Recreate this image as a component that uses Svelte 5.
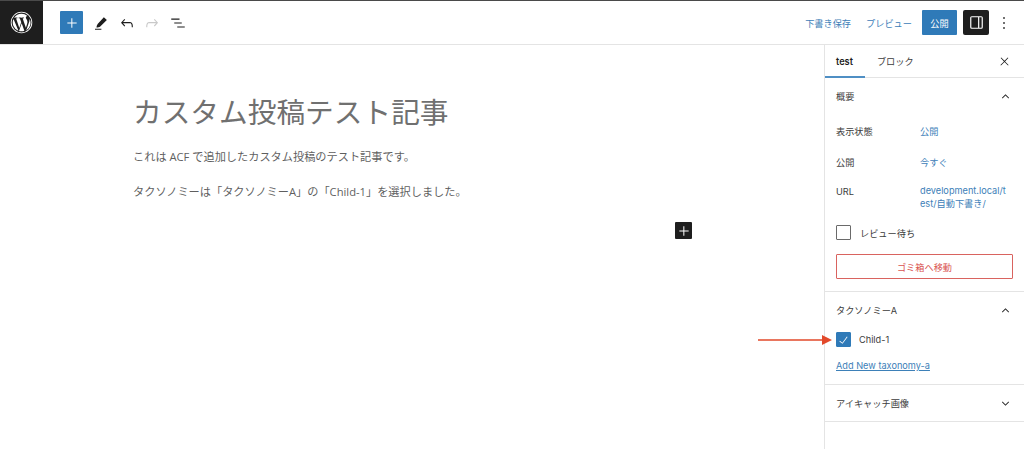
<script lang="ts">
	const jp = 'ja';
</script>

<div class="editor" lang={jp}>
	<header class="topbar">
		<a class="logo" href="#wp" aria-label="WordPress">
			<svg viewBox="0 0 80 80" width="23" height="23">
				<path fill="#fff" d="M40 2.5A37.5 37.5 0 1 0 77.5 40 37.5 37.5 0 0 0 40 2.5zm0 2.9A34.6 34.6 0 1 1 5.4 40 34.6 34.6 0 0 1 40 5.4zM40 9.5a30.5 30.5 0 0 0-25.5 13.8h2c3.200 0 8.100-.4 8.100-.4 1.600-.1 1.800 2.300.200 2.500 0 0-1.700.2-3.500.3l11.100 33 6.700-20-4.700-13c-1.600-.1-3.200-.3-3.200-.3-1.600-.1-1.400-2.600.2-2.500 0 0 5 .4 8 .4 3.200 0 8.100-.4 8.100-.4 1.600-.1 1.800 2.300.2 2.500 0 0-1.600.2-3.500.3l11 32.800 3.100-10.200c1.300-4.200 2.300-7.300 2.300-9.900 0-3.800-1.400-6.400-2.500-8.400-1.600-2.500-3-4.600-3-7.100 0-2.800 2.100-5.400 5.100-5.400h.4A30.400 30.400 0 0 0 40 9.500zM12.200 27.600a30.500 30.500 0 0 0 17.200 41L12.200 27.600zm55.500-.5a23 23 0 0 1 .2 3.100c0 3.100-.6 6.600-2.300 10.900l-9.300 26.700a30.500 30.500 0 0 0 11.400-40.700zM40.600 42.800 31.400 69.400a30.500 30.500 0 0 0 18.700-.5l-.2-.4-9.300-25.700z"/>
			</svg>
		</a>
		<div class="tools">
			<button class="inserter" aria-label="追加">
				<svg viewBox="0 0 24 24" width="16" height="16"><path fill="#fff" d="M11 5h1.500v6.250H19v1.500h-6.500V19H11v-6.250H5v-1.500h6z"/></svg>
			</button>
			<button class="tool" aria-label="ツール">
				<svg viewBox="0 0 24 24" width="18" height="18"><path fill="#1e1e1e" d="M15.800 4.200 19.800 8 11 16.500c-1 .9-3.600 1.500-4.600 1.500-.4 0-.5-.2-.4-.5.200-1.200 1-3.700 1.800-4.500zM4 19.500h8.500V21H4z"/></svg>
			</button>
			<button class="tool" aria-label="元に戻す">
				<svg viewBox="0 0 24 24" width="18" height="18"><path fill="#1e1e1e" d="M18.300 11.700c-.6-.6-1.400-.9-2.300-.9H6.700l2.900-3.300-1.100-1-4.500 5L8.500 16.500l1.100-1-2.900-3.300H16c.5 0 .9.200 1.300.5 1 1 1 3.400 1 4.500v.3h1.500v-.2c0-1.500 0-4.300-1.500-5.600z"/></svg>
			</button>
			<button class="tool" aria-label="やり直す">
				<svg viewBox="0 0 24 24" width="18" height="18"><path fill="#c9c9c9" d="M15.600 6.500l-1.100 1 2.900 3.300H8c-.9 0-1.700.3-2.300.9-1.400 1.500-1.400 4.200-1.400 5.600v.2h1.500v-.3c0-1.100 0-3.500 1-4.500.3-.3.700-.5 1.300-.5h9.200L14.500 15.500l1.100 1 4.500-5z"/></svg>
			</button>
			<button class="tool" aria-label="一覧">
				<svg viewBox="0 0 24 24" width="18" height="18"><path fill="#1e1e1e" d="M3 6h11v1.500H3zM7 11.200h10v1.500H7zM11 16.500h10V18H11z"/></svg>
			</button>
		</div>
		<div class="actions">
			<a class="link save" href="#save">下書き保存</a>
			<a class="link preview" href="#preview">プレビュー</a>
			<button class="publish">公開</button>
			<button class="settings" aria-label="設定">
				<svg viewBox="0 0 24 24" width="19" height="19"><path fill="#fff" d="M18 4H6a2 2 0 0 0-2 2v12a2 2 0 0 0 2 2h12a2 2 0 0 0 2-2V6a2 2 0 0 0-2-2zM5.500 18V6c0-.3.200-.5.500-.5h8v13H6c-.3 0-.5-.2-.5-.5zm13 0c0 .3-.2.500-.5.500h-2.500v-13H18c.3 0 .5.200.5.500z"/></svg>
			</button>
			<button class="more" aria-label="その他">
				<svg viewBox="0 0 24 24" width="20" height="20"><path fill="#1e1e1e" d="M13 19h-2v-2h2zm0-6h-2v-2h2zm0-6h-2V5h2z"/></svg>
			</button>
		</div>
	</header>

	<div class="body">
		<main class="canvas">
			<div class="content">
				<h1>カスタム投稿テスト記事</h1>
				<p class="first">これは ACF で追加したカスタム投稿のテスト記事です。</p>
				<p class="second">タクソノミーは「タクソノミーA」の「Child-1」を選択しました。</p>
			</div>
			<button class="block-add" aria-label="ブロックを追加">
				<svg viewBox="0 0 24 24" width="16" height="16"><path fill="#fff" d="M11 5h1.500v6.250H19v1.500h-6.500V19H11v-6.250H5v-1.500h6z"/></svg>
			</button>
		</main>

		<aside class="sidebar">
			<div class="tabs">
				<span class="tab active">test</span>
				<span class="tab">ブロック</span>
				<svg class="close" viewBox="0 0 24 24" width="13" height="13"><path fill="#1e1e1e" d="M13 11.800l6.100-6.300-1-1-6.100 6.200-6.100-6.200-1 1 6.100 6.300-6.500 6.700 1 1 6.500-6.600 6.500 6.600 1-1z"/></svg>
			</div>

			<section class="panel summary">
				<div class="panel-head">
					<span>概要</span>
					<svg viewBox="0 0 24 24" width="13" height="13"><path fill="#1e1e1e" d="M6.500 15.500 12 10.200l5.500 5.300 1-1.100L12 8l-6.500 6.400z"/></svg>
				</div>
				<div class="row r1"><span class="key">表示状態</span><a href="#v">公開</a></div>
				<div class="row r2"><span class="key">公開</span><a href="#p">今すぐ</a></div>
				<div class="row r3"><span class="key">URL</span><a class="url" href="#u">development.local/test/自動下書き/</a></div>
				<label class="check pending"><span class="box"></span>レビュー待ち</label>
				<button class="trash">ゴミ箱へ移動</button>
			</section>

			<section class="panel taxonomy">
				<div class="panel-head">
					<span>タクソノミーA</span>
					<svg viewBox="0 0 24 24" width="13" height="13"><path fill="#1e1e1e" d="M6.500 15.500 12 10.200l5.500 5.300 1-1.100L12 8l-6.500 6.400z"/></svg>
				</div>
				<label class="check child">
					<span class="box on">
						<svg viewBox="0 0 24 24" width="14" height="14"><path fill="#fff" d="M18.300 5.600 9.900 16.900l-4.600-3.400-.9 1.200 5.800 4.300 9.300-12.600z"/></svg>
					</span>
					Child-1
					<svg class="arrow" viewBox="0 0 74 10" width="74" height="10"><path fill="#e2492b" d="M0 4.300h64V0l10 5-10 5V5.700H0z"/></svg>
				</label>
				<a class="add-term" href="#add">Add New taxonomy-a</a>
			</section>

			<section class="panel featured">
				<div class="panel-head">
					<span>アイキャッチ画像</span>
					<svg viewBox="0 0 24 24" width="13" height="13"><path fill="#1e1e1e" d="M17.500 8.500 12 13.800 6.500 8.500l-1 1.100L12 16l6.500-6.400z"/></svg>
				</div>
			</section>
		</aside>
	</div>
</div>

<style>
	:global(body) {
		margin: 0;
		background: #fff;
	}

	.editor {
		width: 1024px;
		height: 449px;
		overflow: hidden;
		display: flex;
		flex-direction: column;
		border-top: 1px solid #4a4a4a;
		box-sizing: border-box;
		font-family: Inter, "Noto Sans CJK JP", sans-serif;
		font-size: 9.2px;
		color: #3c3c3c;
		text-spacing-trim: space-all;
	}

	button {
		border: 0;
		padding: 0;
		background: none;
		font: inherit;
		display: flex;
		align-items: center;
		justify-content: center;
	}

	a {
		color: #3d80b8;
		text-decoration: none;
	}

	.topbar {
		height: 44px;
		flex-shrink: 0;
		display: flex;
		align-items: center;
		border-bottom: 1px solid #e4e4e4;
		box-sizing: border-box;
	}

	.logo {
		width: 43px;
		height: 43px;
		background: #1e1e1e;
		display: flex;
		align-items: center;
		justify-content: center;
	}

	.tools {
		display: flex;
		align-items: center;
		margin-left: 17px;
	}

	.inserter {
		width: 23px;
		height: 23px;
		background: #2f7ab8;
		border-radius: 1px;
		margin-right: 9px;
	}

	.tool {
		width: 18px;
		height: 20px;
		margin-right: 7.5px;
	}

	.actions {
		margin-left: auto;
		display: flex;
		align-items: center;
		padding-right: 10px;
	}

	.preview {
		margin-left: 15px;
	}

	.publish {
		margin-left: 10px;
		width: 35px;
		height: 25px;
		background: #2f7ab8;
		color: #fff;
		border-radius: 1px;
	}

	.settings {
		margin-left: 6px;
		width: 26px;
		height: 25px;
		background: #1e1e1e;
		border-radius: 2px;
	}

	.more {
		margin-left: 5px;
		width: 20px;
		height: 25px;
	}

	.body {
		flex: 1;
		display: flex;
		min-height: 0;
	}

	.canvas {
		flex: 1;
		position: relative;
		padding: 48px 0 0 133px;
		color: #666;
	}

	h1 {
		margin: 0;
		font-size: 28.7px;
		line-height: 40px;
		font-weight: 400;
		color: #707070;
	}

	.canvas p {
		margin: 0;
		font-family: "Open Sans", "Noto Sans CJK JP", sans-serif;
		font-size: 11.2px;
		line-height: 18px;
		color: #5f5f5f;
	}

	.first {
		padding-top: 15px;
	}

	.second {
		padding-top: 17px;
	}

	.block-add {
		position: absolute;
		left: 675px;
		top: 177px;
		width: 17px;
		height: 17px;
		background: #1e1e1e;
		border-radius: 1px;
	}

	.sidebar {
		width: 200px;
		box-sizing: border-box;
		flex-shrink: 0;
		border-left: 1px solid #e4e4e4;
	}

	.tabs {
		height: 33px;
		display: flex;
		align-items: center;
		border-bottom: 1px solid #e4e4e4;
		position: relative;
		box-sizing: border-box;
		padding-left: 11px;
	}

	.tab.active {
		font-weight: 600;
		color: #1e1e1e;
		margin-right: 24px;
	}

	.tab.active::after {
		content: "";
		position: absolute;
		left: 0;
		bottom: -1px;
		width: 40px;
		height: 2px;
		background: #4f8fc4;
	}

	.close {
		margin-left: auto;
		margin-right: 13px;
	}

	.panel {
		border-bottom: 1px solid #e4e4e4;
		padding: 0 12px 0 11px;
	}

	.panel-head {
		display: flex;
		align-items: center;
		justify-content: space-between;
		height: 36px;
	}

	.summary {
		height: 214px;
		box-sizing: border-box;
	}

	.row {
		display: grid;
		grid-template-columns: 84px 1fr;
		line-height: 13px;
	}

	.r1 {
		margin-top: 11px;
	}

	.r2 {
		margin-top: 18px;
	}

	.r3 {
		margin-top: 16px;
	}

	.url {
		overflow-wrap: anywhere;
		line-height: 12.5px;
		padding-right: 3px;
	}

	.check {
		display: flex;
		align-items: center;
		position: relative;
	}

	.pending {
		margin-top: 15px;
		gap: 9px;
	}

	.box {
		width: 13px;
		height: 13px;
		border: 1px solid #6a6a6a;
		border-radius: 1px;
		display: flex;
		align-items: center;
		justify-content: center;
		flex-shrink: 0;
	}

	.box.on {
		background: #2f7ab8;
		border-color: #2f7ab8;
	}

	.trash {
		margin-top: 14px;
		width: 177px;
		height: 25px;
		border: 1px solid #d9635f;
		border-radius: 1px;
		color: #d9534f;
	}

	.taxonomy {
		height: 93px;
		box-sizing: border-box;
	}

	.child {
		margin-top: 4px;
		gap: 8px;
	}

	.arrow {
		position: absolute;
		left: -78px;
		top: 3px;
	}

	.add-term {
		display: block;
		margin-top: 13px;
		text-decoration: underline;
	}

	.featured {
		height: 37px;
		box-sizing: border-box;
	}
</style>
